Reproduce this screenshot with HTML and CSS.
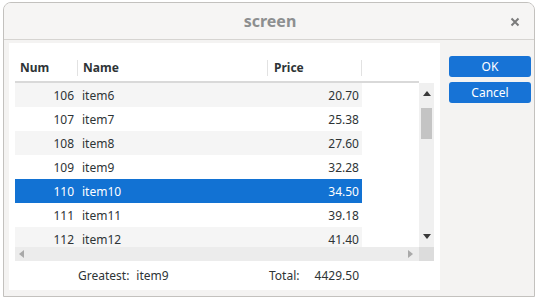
FILE: index.html
```html
<!DOCTYPE html>
<html>
<head>
<meta charset="utf-8">
<link rel="stylesheet" href="styles.css">
</head>
<body>
<div class="window">
  <div class="titlebar">
    <span class="title">screen</span>
    <svg class="close" width="10" height="10" viewBox="0 0 10 10"><path d="M1.5 1.5 L8.5 8.5 M8.5 1.5 L1.5 8.5" stroke="#7b7b7b" stroke-width="2" fill="none"/></svg>
  </div>
  <div class="content">
    <div class="panel">
      <div class="table">
        <div class="view">
          <div class="main">
            <div class="header">
              <div class="hcell c-num">Num</div>
              <div class="hcell c-name">Name</div>
              <div class="hcell c-price">Price</div>
            </div>
            <div class="body">
              <div class="row alt"><span class="num">106</span><span class="name">item6</span><span class="price">20.70</span></div>
              <div class="row"><span class="num">107</span><span class="name">item7</span><span class="price">25.38</span></div>
              <div class="row alt"><span class="num">108</span><span class="name">item8</span><span class="price">27.60</span></div>
              <div class="row"><span class="num">109</span><span class="name">item9</span><span class="price">32.28</span></div>
              <div class="row sel"><span class="num">110</span><span class="name">item10</span><span class="price">34.50</span></div>
              <div class="row"><span class="num">111</span><span class="name">item11</span><span class="price">39.18</span></div>
              <div class="row alt"><span class="num">112</span><span class="name">item12</span><span class="price">41.40</span></div>
            </div>
          </div>
          <div class="vcol">
            <div class="vscroll">
              <svg class="up" width="8" height="5" viewBox="0 0 8 5"><path d="M0 5 L4 0 L8 5 Z" fill="#3a3a3a"/></svg>
              <div class="thumb"></div>
              <div class="spacer"></div>
              <svg class="down" width="8" height="5" viewBox="0 0 8 5"><path d="M0 0 L8 0 L4 5 Z" fill="#3a3a3a"/></svg>
            </div>
          </div>
        </div>
        <div class="hrow">
          <div class="hscroll">
            <svg width="5" height="8" viewBox="0 0 5 8"><path d="M5 0 L5 8 L0 4 Z" fill="#a9a9a9"/></svg>
            <svg width="5" height="8" viewBox="0 0 5 8"><path d="M0 0 L5 4 L0 8 Z" fill="#a9a9a9"/></svg>
          </div>
          <div class="corner"></div>
        </div>
      </div>
      <div class="footer">
        <div class="f-num"></div>
        <div class="f-name"><span class="lbl">Greatest:</span><span>item9</span></div>
        <div class="f-price"><span>Total:</span><span>4429.50</span></div>
      </div>
    </div>
    <div class="buttons">
      <div class="btn">OK</div>
      <div class="btn">Cancel</div>
    </div>
  </div>
</div>
</body>
</html>
```

FILE: styles.css
```css
* { box-sizing: border-box; }
body {
  margin: 0;
  background: #ffffff;
  font-family: "Noto Sans", "Open Sans", sans-serif;
  font-size: 12px;
  color: #2e3436;
}
.window {
  margin: 2px 0 0 3px;
  width: 532px;
  height: 295px;
  border: 1px solid #c3c1be;
  border-radius: 8px 8px 0 0;
  background: #f6f5f4;
  overflow: hidden;
}
.titlebar {
  height: 37px;
  border-bottom: 1px solid #d6d4d1;
  display: flex;
  align-items: center;
  justify-content: center;
  position: relative;
  background: #f6f5f4;
}
.title {
  font-weight: bold;
  font-size: 16px;
  color: #8d8f90;
  margin-left: 2px;
}
.close {
  position: absolute;
  right: 14px;
  top: 14px;
}
.content {
  display: flex;
  padding: 3px 3px 0 5px;
  gap: 9px;
  background: #f4f3f2;
  height: 257px;
}
.panel {
  width: 431px;
  height: 247px;
  background: #ffffff;
  padding: 12px 6px 0 6px;
  display: flex;
  flex-direction: column;
}
.table { width: 419px; }
.view { display: flex; }
.main { width: 404px; }
.header {
  height: 28px;
  border-bottom: 2px solid #d9d9d9;
  display: grid;
  grid-template-columns: 63px 190px 94px;
  align-items: center;
  font-weight: bold;
}
.hcell {
  padding-left: 5px;
  height: 16px;
  line-height: 16px;
  border-right: 1px solid #e2e2e2;
}
.c-price { padding-left: 6px; }
.body {
  height: 164px;
  overflow: hidden;
}
.row {
  width: 347px;
  height: 24px;
  display: grid;
  grid-template-columns: 63px 190px 94px;
  align-items: center;
  background: #ffffff;
}
.row.alt { background: #f5f5f5; }
.row.sel { background: #1272d3; color: #ffffff; }
.num { text-align: right; padding-right: 4px; }
.name { padding-left: 4px; }
.price { text-align: right; padding-right: 3px; }
.vcol {
  width: 15px;
  padding-top: 28px;
}
.vscroll {
  height: 164px;
  background: #f0f0f0;
  display: flex;
  flex-direction: column;
  align-items: center;
}
.up { margin-top: 8px; display: block; }
.thumb {
  margin-top: 12px;
  width: 11px;
  height: 31px;
  background: #c4c4c4;
}
.spacer { flex: 1; }
.down { margin-bottom: 8px; display: block; }
.hrow {
  display: flex;
  height: 14px;
}
.hscroll {
  width: 404px;
  background: #ececec;
  display: flex;
  align-items: center;
  justify-content: space-between;
  padding: 0 6px 0 4px;
}
.hscroll svg { display: block; }
.corner {
  width: 15px;
  background: #dcdcdc;
}
.footer {
  height: 29px;
  display: grid;
  grid-template-columns: 63px 190px 94px;
  align-items: center;
}
.f-name { padding-left: 0; }
.f-name .lbl { margin-right: 7px; }
.f-price {
  display: flex;
  justify-content: space-between;
  padding-left: 1px;
  padding-right: 3px;
}
.buttons {
  display: flex;
  flex-direction: column;
  gap: 5px;
  padding-top: 13px;
}
.btn {
  width: 82px;
  height: 21px;
  border-radius: 3px;
  background: #1773d6;
  color: #ffffff;
  text-align: center;
  line-height: 21px;
  font-size: 12px;
}
```
